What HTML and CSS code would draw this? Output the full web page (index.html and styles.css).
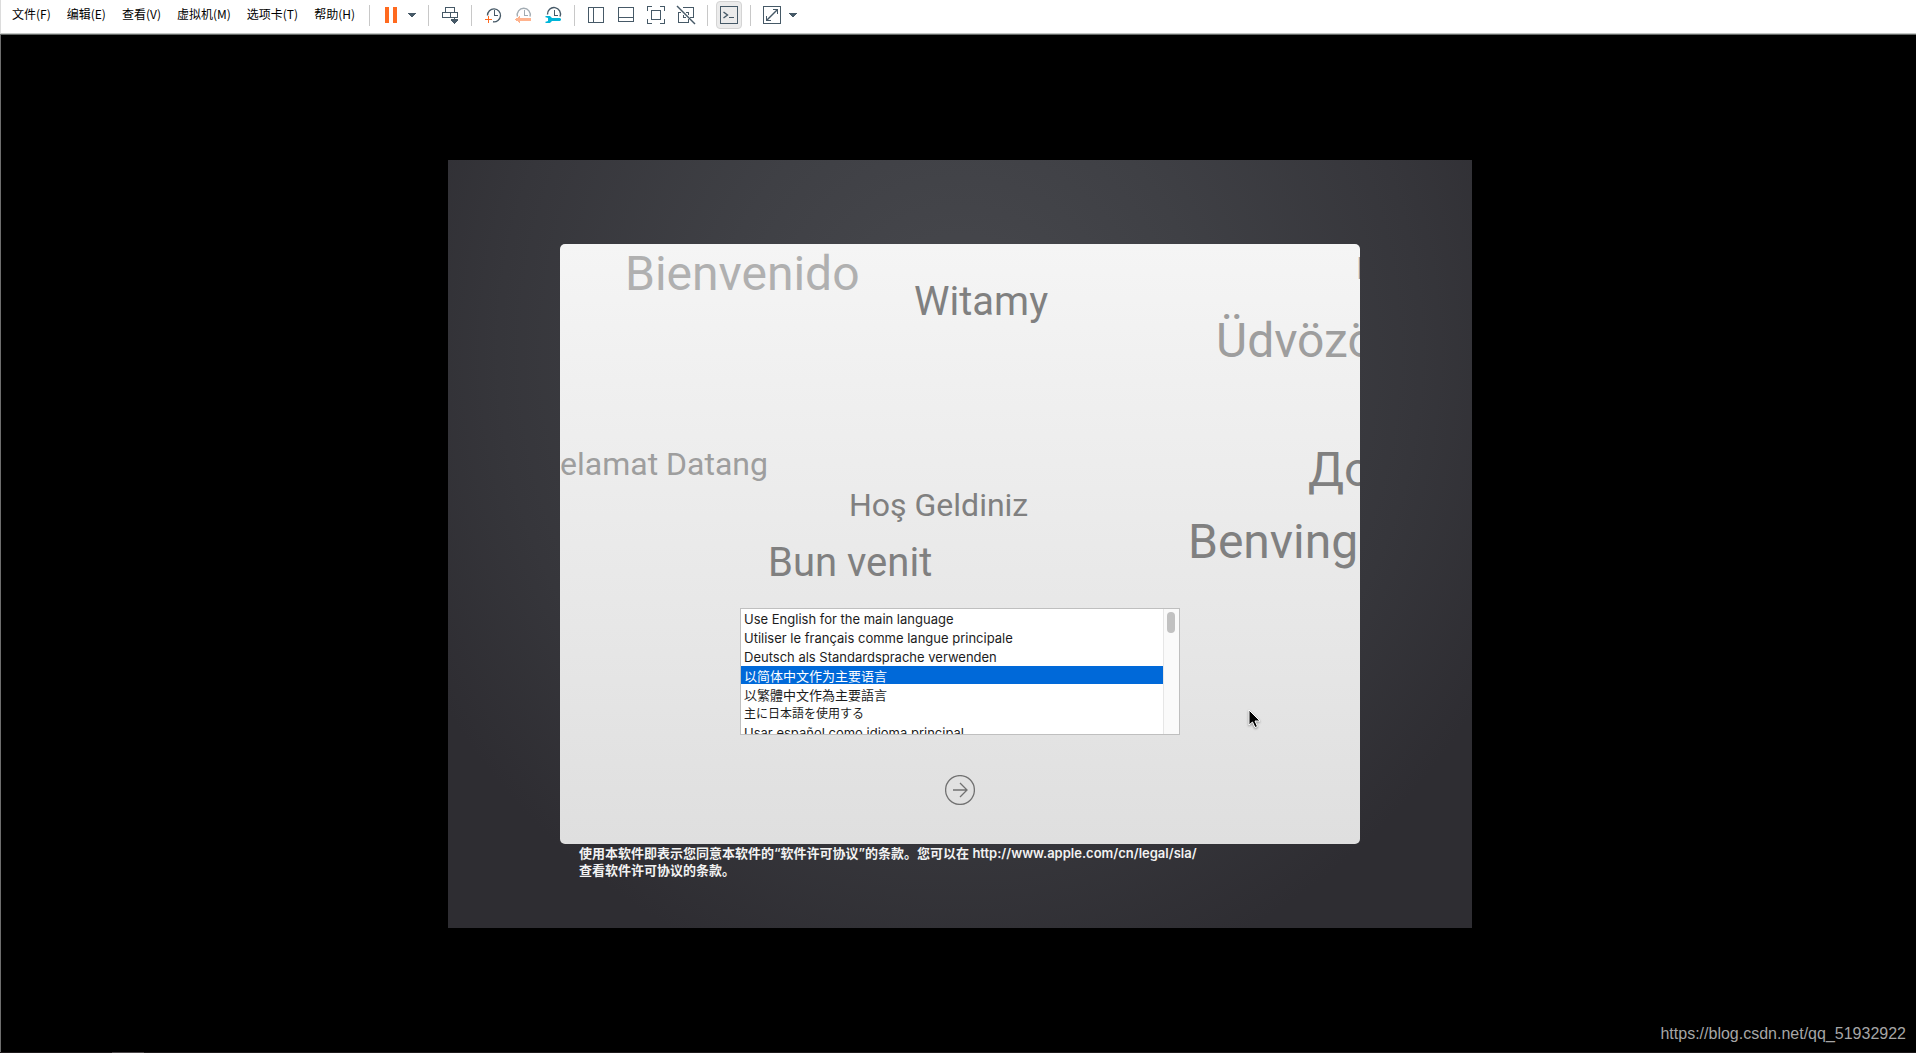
FILE: index.html
```html
<!DOCTYPE html>
<html lang="zh-CN">
<head>
  <meta charset="UTF-8">
  <title>macOS 安装</title>
  <link rel="stylesheet" href="styles.css">
</head>
<body>
  <header class="toolbar">
    <nav class="menu">
      <button type="button">文件(F)</button>
      <button type="button">编辑(E)</button>
      <button type="button">查看(V)</button>
      <button type="button">虚拟机(M)</button>
      <button type="button">选项卡(T)</button>
      <button type="button">帮助(H)</button>
    </nav>
    <span class="sep"></span>
    <button type="button" class="tool" aria-label="挂起">
      <svg width="20" height="20"><path class="orange-fill" d="M4 2h4v16H4zM12 2h4v16h-4z"/></svg>
    </button>
    <button type="button" class="caret" aria-label="电源选项">
      <svg width="12" height="20"><path d="M2 8h8v1L6 12 2 9z"/></svg>
    </button>
    <span class="sep"></span>
    <button type="button" class="tool" aria-label="发送 Ctrl+Alt+Del">
      <svg width="20" height="20"><path d="M5.500 2.500h9v5h-9zM2.500 7.500h8v5h-8zM10.500 7.500h7v5h-7zM14.500 12v5"/><path class="solid" d="M11 14h7v1l-3.500 4L11 15z"/></svg>
    </button>
    <span class="sep"></span>
    <button type="button" class="tool" aria-label="拍摄快照">
      <svg width="20" height="20"><path class="smooth" d="M4.500 10.500a6.500 6.500 0 1 1 5.500 6.300"/><path d="M11.500 5v5.500H15"/><path class="orange" d="M5.500 11v7M2 14.500h7"/></svg>
    </button>
    <button type="button" class="tool" aria-label="恢复快照" disabled>
      <svg width="20" height="20"><path class="smooth" d="M4.500 11.500a6.500 6.500 0 1 1 12.500 0"/><path d="M11.500 5v5.500H15"/><path class="orange-fill" d="M2 14.500L7 11v2h11v3H7v2z"/></svg>
    </button>
    <button type="button" class="tool" aria-label="管理快照">
      <svg width="20" height="20"><path class="smooth" d="M4.500 9.500a6.500 6.500 0 1 1 12.500 2"/><path d="M11.500 5v5.500H15"/><path class="cyan-fill" d="M3 11h4l2 2h8l1 1v1l-1 1H9l-2 2H3l-1-1 3-1v-3l-3-1z"/></svg>
    </button>
    <span class="sep"></span>
    <button type="button" class="tool" aria-label="显示库">
      <svg width="20" height="20"><path d="M2.500 2.500h15v15h-15zM7.500 2.500v15"/></svg>
    </button>
    <button type="button" class="tool" aria-label="显示缩略图栏">
      <svg width="20" height="20"><path d="M2.500 2.500h15v14h-15zM2.500 12.500h15"/></svg>
    </button>
    <button type="button" class="tool" aria-label="全屏">
      <svg width="20" height="20"><path d="M1.500 6V1.500H6M14 1.500h4.500V6M18.500 14v4.500H14M6 18.500H1.500V14M5.500 5.500h9v9h-9z"/></svg>
    </button>
    <button type="button" class="tool" aria-label="Unity 模式">
      <svg width="20" height="20"><path d="M7 2.500h10.500v10H14M2.500 7v10.500h10V14M2.500 7.500H5M7.500 10v2.500H10M10 7.500h2.500V10"/><path class="smooth" d="M1 1l18 18"/></svg>
    </button>
    <span class="sep"></span>
    <button type="button" class="tool active" aria-label="控制台视图">
      <svg width="20" height="20"><path d="M1.500 1.500h17v17h-17zM10 12.500h5"/><path class="smooth" d="M4.500 7l4 3-4 3"/></svg>
    </button>
    <span class="sep"></span>
    <button type="button" class="tool" aria-label="自由拉伸">
      <svg width="20" height="20"><path d="M1.500 1.500h17v17h-17zM11 4.500h4.500V9M4.500 11v4.500H9"/><path class="smooth" d="M5 15L15 5"/></svg>
    </button>
    <button type="button" class="caret" aria-label="拉伸选项">
      <svg width="12" height="20"><path d="M2 8h8v1L6 12 2 9z"/></svg>
    </button>
  </header>

  <main class="console">
    <div class="screen">
      <section class="panel">
        <div class="greetings">
          <span class="hello large light bienvenido">Bienvenido</span>
          <span class="hello medium witamy">Witamy</span>
          <span class="hello small mid edge">I</span>
          <span class="hello large mid udvozoljuk">Üdvözöljük</span>
          <span class="hello small mid selamat">Selamat Datang</span>
          <span class="hello small hos">Hoş Geldiniz</span>
          <span class="hello medium bun">Bun venit</span>
          <span class="hello large dobro">Добро пожаловать</span>
          <span class="hello large benvinguts">Benvinguts</span>
        </div>
        <div class="languages">
          <select size="7" aria-label="语言">
            <option lang="en" class="latin">Use English for the main language</option>
            <option lang="fr" class="latin">Utiliser le français comme langue principale</option>
            <option lang="de" class="latin">Deutsch als Standardsprache verwenden</option>
            <option lang="zh-CN" selected>以简体中文作为主要语言</option>
            <option lang="zh-TW">以繁體中文作為主要語言</option>
            <option lang="ja">主に日本語を使用する</option>
            <option lang="es" class="latin">Usar español como idioma principal</option>
          </select>
          <div class="scrollbar"><div class="thumb"></div></div>
        </div>
        <button type="button" class="next" aria-label="继续">
          <svg width="30" height="30"><circle cx="15" cy="15" r="14.400"/><path d="M8 15h14M15 8l7 7-7 7"/></svg>
        </button>
        <svg class="pointer" width="14" height="20"><path d="M1 1v15l3.500-3 2.500 5.500 2.500-1L7 12h5z"/></svg>
      </section>
      <p class="license">使用本软件即表示您同意本软件的“软件许可协议”的条款。您可以在 http://www.apple.com/cn/legal/sla/<br>查看软件许可协议的条款。</p>
    </div>
    <span class="watermark">https://blog.csdn.net/qq_51932922</span>
  </main>
  <footer class="statusline"></footer>
</body>
</html>
```

FILE: styles.css
```css
* {
  box-sizing: border-box;
}
body {
  margin: 0;
  min-height: 100vh;
  display: flex;
  flex-direction: column;
  background: #000;
  font-family: "Noto Sans CJK SC", sans-serif;
}
button {
  padding: 0;
  border: none;
  background: none;
  font: inherit;
  color: inherit;
}

/* toolbar */
.toolbar {
  display: flex;
  align-items: center;
  height: 34px;
  padding: 0 0 3px 3px;
  background: #fff;
  border-bottom: 1px solid #c3c6c4;
  border-left: 1px solid #dcdcdc;
}
.menu {
  display: flex;
  width: 359px;
  font-size: 12px;
  line-height: 20px;
  color: #000;
  padding-bottom: 3px;
}
.menu button {
  padding: 0 8px;
  white-space: nowrap;
}
.sep {
  width: 1px;
  height: 21px;
  margin: 0 6px;
  background: #c8c8c8;
}
.tool {
  display: flex;
  align-items: center;
  justify-content: center;
  width: 30px;
  height: 28px;
}
.tool svg,
.caret svg {
  display: block;
  fill: none;
  stroke: #465967;
  shape-rendering: crispEdges;
}
.tool .smooth {
  stroke-width: 1.4;
  shape-rendering: auto;
}
.tool .solid {
  fill: #465967;
  stroke: none;
}
.tool .orange {
  stroke: #ff6a1f;
}
.tool .orange-fill {
  fill: #ff6a1f;
  stroke: none;
}
.tool .cyan-fill {
  fill: #00b5d9;
  stroke: none;
  shape-rendering: auto;
}
.tool:disabled {
  opacity: 0.5;
}
.tool.active {
  width: 26px;
  margin: 0 2px;
  background: #ebebeb;
  border: 1px solid #d4d4d4;
  border-radius: 4px;
}
.caret {
  width: 16px;
}
.caret svg {
  fill: #465967;
  stroke: none;
}

/* guest display */
.console {
  position: relative;
  flex: 1;
  display: flex;
  align-items: center;
  justify-content: center;
  padding-left: 3px;
  border-top: 1px solid #656967;
  border-left: 1px solid #6e6e6e;
}
.screen {
  width: 100%;
  max-width: 1024px;
  min-height: 768px;
  padding-top: 84px;
  background: radial-gradient(ellipse 60% 85% at 50% 25%, #48494e 0%, #3f4045 40%, #36363b 75%, #2e2d32 100%);
}
.panel {
  position: relative;
  display: flex;
  flex-direction: column;
  align-items: center;
  width: 80%;
  max-width: 800px;
  height: 600px;
  margin: 0 auto;
  overflow: hidden;
  border-radius: 5px;
  background: linear-gradient(#f5f5f5, #dfdfdf);
}
.greetings {
  height: 364px;
  font-family: Roboto, sans-serif;
  color: #808080;
}
.hello {
  position: absolute;
  white-space: nowrap;
}
.large {
  font-size: 48px;
  line-height: 48px;
}
.medium {
  font-size: 40px;
  line-height: 40px;
}
.small {
  font-size: 32px;
  line-height: 32px;
}
.light {
  color: #b0b0b0;
}
.mid {
  color: #9e9e9e;
}
.bienvenido {
  left: 65px;
  top: 6px;
}
.witamy {
  left: 354px;
  top: 38px;
}
.edge {
  left: 796px;
  top: 8px;
}
.udvozoljuk {
  left: 656px;
  top: 73px;
}
.selamat {
  right: 592px;
  top: 204px;
}
.hos {
  left: 289px;
  top: 245px;
}
.bun {
  left: 208px;
  top: 299px;
}
.dobro {
  left: 748px;
  top: 202px;
}
.benvinguts {
  left: 628px;
  top: 274px;
}

/* language list */
.languages {
  display: flex;
  width: 440px;
  height: 127px;
  border: 1px solid #bfbfbf;
  background: #fff;
}
.languages select {
  flex: 1;
  height: 125px;
  padding: 0;
  border: none;
  outline: none;
  overflow: hidden;
  background: #fff;
  color: #1c1c1c;
  font-family: Inter, "Noto Sans CJK SC", sans-serif;
  font-size: 13px;
  scrollbar-width: none;
}
.languages option {
  height: 18px;
  min-height: 18px;
  margin-bottom: 1px;
  padding: 0 3px;
}
.languages .latin {
  padding-top: 2px;
}
.languages option:checked {
  background: linear-gradient(#0069d9, #0069d9);
  color: #fff;
}
.languages option:lang(zh-TW) {
  font-family: "Noto Sans CJK TC", sans-serif;
}
.languages option:lang(ja) {
  font-family: "Noto Sans CJK JP", sans-serif;
  font-size: 12px;
}
.scrollbar {
  width: 16px;
  padding: 3px;
  background: #fafafa;
  border-left: 1px solid #e6e6e6;
}
.thumb {
  width: 8px;
  height: 21px;
  border-radius: 4px;
  background: #c1c1c1;
}
.next {
  margin-top: 40px;
}
.next svg {
  display: block;
  fill: none;
  stroke: #717171;
  stroke-width: 1.3;
}
.pointer {
  position: absolute;
  left: 688px;
  top: 465px;
  fill: #000;
  stroke: #fff;
  filter: drop-shadow(0 1px 1px rgba(0,0,0,0.4));
}
.license {
  width: 80%;
  max-width: 800px;
  margin: 0 auto;
  padding: 1px 19px;
  font-family: Inter, "Noto Sans CJK SC", sans-serif;
  font-size: 13px;
  font-weight: 600;
  line-height: 17px;
  color: #f2f2f2;
}
.watermark {
  position: absolute;
  right: 10px;
  bottom: 8px;
  font-family: "Liberation Sans", sans-serif;
  font-size: 16px;
  line-height: 20px;
  color: #a6a6a6;
}
.statusline {
  height: 1px;
  background: linear-gradient(90deg, #1d191b 112px, #4a4648 112px, #4a4648 144px, #1d191b 144px);
}
```
